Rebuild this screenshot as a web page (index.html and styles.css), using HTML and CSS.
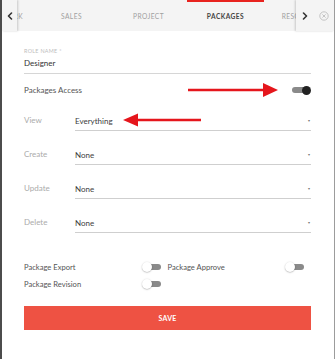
FILE: index.html
```html
<!DOCTYPE html>
<html>
<head>
<meta charset="utf-8">
<link rel="stylesheet" href="styles.css">
</head>
<body>
<div class="frame">
  <header class="tabbar">
    <button class="nav nav-left" aria-label="Previous">
      <svg width="6" height="8" viewBox="0 0 6 8"><path d="M4.5 1 L1.5 4 L4.5 7" fill="none" stroke="#333" stroke-width="1.6" stroke-linecap="round" stroke-linejoin="round"/></svg>
    </button>
    <div class="tabs">
      <div class="track">
        <span class="tab">ROLE NETWORK</span>
        <span class="tab">SALES</span>
        <span class="tab">PROJECT</span>
        <span class="tab active">PACKAGES</span>
        <span class="tab">RESOURCES</span>
      </div>
    </div>
    <div class="nav-right">
      <button class="nav nav-next" aria-label="Next">
        <svg width="6" height="8" viewBox="0 0 6 8"><path d="M1.5 1 L4.5 4 L1.5 7" fill="none" stroke="#333" stroke-width="1.6" stroke-linecap="round" stroke-linejoin="round"/></svg>
      </button>
      <button class="close" aria-label="Close">
        <svg width="10" height="10" viewBox="0 0 10 10"><circle cx="5" cy="5" r="4.2" fill="none" stroke="#b8b8b8" stroke-width="0.8"/><path d="M3.4 3.4 L6.6 6.6 M6.6 3.4 L3.4 6.6" stroke="#b8b8b8" stroke-width="0.8"/></svg>
      </button>
    </div>
  </header>

  <main class="form">
    <div class="field role">
      <label class="tiny-label">ROLE NAME *</label>
      <div class="input">Designer</div>
    </div>

    <div class="access-row">
      <span class="access-label">Packages Access</span>
      <span class="switch on"></span>
    </div>

    <div class="perm-list">
      <div class="perm-row">
        <span class="perm-label">View</span>
        <div class="select"><span>Everything</span><span class="caret">▾</span></div>
      </div>
      <div class="perm-row">
        <span class="perm-label">Create</span>
        <div class="select"><span>None</span><span class="caret">▾</span></div>
      </div>
      <div class="perm-row">
        <span class="perm-label">Update</span>
        <div class="select"><span>None</span><span class="caret">▾</span></div>
      </div>
      <div class="perm-row">
        <span class="perm-label">Delete</span>
        <div class="select"><span>None</span><span class="caret">▾</span></div>
      </div>
    </div>

    <div class="flags">
      <div class="flag"><span>Package Export</span><span class="switch"></span></div>
      <div class="flag"><span>Package Approve</span><span class="switch"></span></div>
      <div class="flag"><span>Package Revision</span><span class="switch"></span></div>
    </div>

    <button class="save">SAVE</button>
  </main>

  <svg class="arrow arrow-right" width="92" height="16" viewBox="0 0 92 16">
    <path d="M0 8 H78" stroke="#e5161c" stroke-width="2.6"/>
    <polygon points="75,1 90,8 75,15" fill="#e5161c"/>
  </svg>
  <svg class="arrow arrow-left" width="80" height="16" viewBox="0 0 80 16">
    <path d="M12 8 H78" stroke="#e5161c" stroke-width="2.6"/>
    <polygon points="0,8 15,1.5 15,14.5" fill="#e5161c"/>
  </svg>
</div>
</body>
</html>
```

FILE: styles.css
```css
html, body {
  margin: 0;
  padding: 0;
  background: #fff;
}
body {
  font-family: Lato, "Liberation Sans", Arial, sans-serif;
}
.frame {
  position: relative;
  width: 335px;
  height: 359px;
  box-sizing: border-box;
  border-left: 2px solid #4c4c4c;
  border-right: 1px solid #9c9c9c;
  overflow: hidden;
}
button {
  font-family: inherit;
  border: 0;
  padding: 0;
  background: none;
  cursor: pointer;
}

/* tab bar */
.tabbar {
  display: flex;
  height: 31px;
  background: #f4f4f4;
}
.nav {
  display: flex;
  align-items: center;
  justify-content: center;
}
.nav-left {
  position: relative;
  z-index: 1;
  width: 15px;
  flex: 0 0 15px;
  background: #f4f4f4;
  box-shadow: 1px 0 2px rgba(0,0,0,0.18);
  padding-left: 1px;
}
.tabs {
  flex: 1;
  overflow: hidden;
}
.track {
  display: flex;
  height: 100%;
  margin-left: -61px;
}
.tab {
  position: relative;
  flex: 0 0 77px;
  display: flex;
  align-items: center;
  justify-content: center;
  font-size: 6.6px;
  letter-spacing: 0.45px;
  color: #a0a0a0;
  white-space: nowrap;
}
.tab.active {
  color: #444;
  font-weight: 700;
}
.tab.active::before {
  content: "";
  position: absolute;
  left: 0;
  right: 0;
  top: 0;
  height: 2px;
  background: #e8231f;
}
.nav-right {
  position: relative;
  z-index: 1;
  flex: 0 0 38px;
  display: flex;
  align-items: center;
  background: #f4f4f4;
  box-shadow: -1px 0 2px rgba(0,0,0,0.18);
}
.nav-next {
  width: 8px;
  height: 10px;
  margin-left: 5px;
}
.close {
  display: flex;
  width: 10px;
  height: 10px;
  margin-left: 10px;
  margin-top: 1px;
}

/* form */
.form {
  padding: 16px 23px 0 22px;
  display: flex;
  flex-direction: column;
}
.tiny-label {
  display: block;
  font-size: 5.4px;
  line-height: 8px;
  letter-spacing: 0.3px;
  color: #bdbdbd;
}
.input {
  margin-top: 2px;
  font-size: 8px;
  line-height: 12px;
  color: #333;
  padding-bottom: 4px;
  border-bottom: 1px solid #d6d6d6;
}
.access-row {
  margin-top: 10px;
  height: 12px;
  display: flex;
  align-items: center;
  justify-content: space-between;
  font-size: 8px;
  color: #555;
}

.perm-list {
  margin-top: 18px;
  display: flex;
  flex-direction: column;
  gap: 17px;
}
.perm-row {
  display: flex;
  align-items: flex-start;
}
.perm-label {
  flex: 0 0 51px;
  font-size: 8px;
  line-height: 12px;
  color: #ababab;
}
.select {
  flex: 1;
  display: flex;
  justify-content: space-between;
  font-size: 8px;
  line-height: 12px;
  color: #3c3c3c;
  padding-top: 1px;
  padding-bottom: 3px;
  border-bottom: 1px solid #cfcfcf;
}
.caret {
  font-size: 4px;
  color: #777;
  line-height: 12px;
  margin-right: 1px;
}

/* toggles */
.switch {
  position: relative;
  display: inline-block;
  width: 19px;
  height: 10px;
  flex: 0 0 19px;
}
.switch::before {
  content: "";
  position: absolute;
  left: 5px;
  right: 0;
  top: 2px;
  height: 6px;
  border-radius: 3px;
  background: #8a8a8a;
}
.switch::after {
  content: "";
  position: absolute;
  left: 0;
  top: 0;
  width: 10px;
  height: 10px;
  border-radius: 50%;
  background: #fff;
  box-shadow: 0 0.5px 1.5px rgba(0,0,0,0.35);
}
.switch.on::before {
  left: 0;
  right: 5px;
}
.switch.on::after {
  left: auto;
  right: 0;
  width: 9px;
  height: 9px;
  top: 0.5px;
  background: #222;
  box-shadow: none;
}

.flags {
  margin-top: 29px;
  display: grid;
  grid-template-columns: 1fr 1fr;
  row-gap: 7px;
}
.flag {
  display: flex;
  align-items: center;
  justify-content: space-between;
  height: 10px;
  padding-right: 7px;
  font-size: 7.6px;
  color: #555;
}

.save {
  margin-top: 17px;
  height: 24px;
  width: 100%;
  background: #ee5243;
  color: #fff;
  font-size: 7px;
  font-weight: 700;
  letter-spacing: 0.2px;
}

/* annotation arrows */
.arrow {
  position: absolute;
}
.arrow-right {
  left: 186px;
  top: 82px;
}
.arrow-left {
  left: 121px;
  top: 112px;
}
```
